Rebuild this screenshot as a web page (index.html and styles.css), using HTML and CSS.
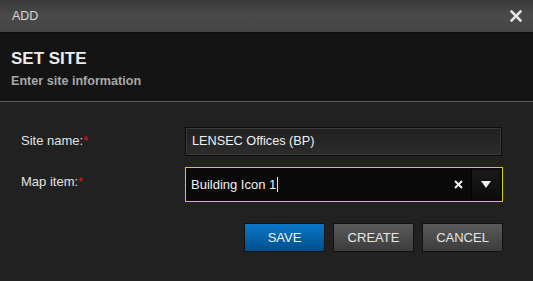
FILE: index.html
```html
<!DOCTYPE html>
<html>
<head>
<meta charset="utf-8">
<link rel="stylesheet" href="styles.css">
</head>
<body>
<div class="dialog">
  <div class="titlebar">
    <span class="title">ADD</span>
    <svg class="close" width="12" height="12" viewBox="0 0 12 12"><path d="M1.5 1.5 L10.5 10.5 M10.5 1.5 L1.5 10.5" stroke="#e6e6e6" stroke-width="2.6" stroke-linecap="square"/></svg>
  </div>
  <div class="header">
    <div class="heading">SET SITE</div>
    <div class="sub">Enter site information</div>
  </div>
  <div class="content">
    <div class="row">
      <label class="label">Site name:<span class="req">*</span></label>
      <div class="input">LENSEC Offices (BP)</div>
    </div>
    <div class="row row2">
      <label class="label">Map item:<span class="req">*</span></label>
      <div class="select">
        <div class="value">Building Icon 1<span class="caret"></span></div>
        <svg class="clear" width="9" height="9" viewBox="0 0 9 9"><path d="M1 1 L8 8 M8 1 L1 8" stroke="#f0f0f0" stroke-width="2"/></svg>
        <div class="arrow"><svg width="10" height="8" viewBox="0 0 10 8"><path d="M0 0 H10 L5 7 Z" fill="#f2f2f2"/></svg></div>
      </div>
    </div>
    <div class="buttons">
      <button class="btn primary">SAVE</button>
      <button class="btn">CREATE</button>
      <button class="btn">CANCEL</button>
    </div>
  </div>
</div>
</body>
</html>
```
FILE: styles.css
```css
html, body {
  margin: 0;
  padding: 0;
  background: #202020;
  font-family: "Liberation Sans", Arial, sans-serif;
}
.dialog {
  width: 533px;
  height: 281px;
  background: #212121;
  overflow: hidden;
}
.titlebar {
  box-sizing: border-box;
  background: linear-gradient(#3a3a3a, #4a4a4a 50%, #454545);
  border-bottom: 1px solid #0e0e0e;
  display: flex;
  align-items: center;
  justify-content: space-between;
  padding: 0 11px 0 12px;
  height: 33px;
}
.title {
  color: #d6d6d6;
  font-size: 12.5px;
}
.close { display: block; }
.header {
  background: #141414;
  height: 69px;
  box-sizing: border-box;
  border-bottom: 1px solid #5a5a5a;
  padding: 16px 0 0 11px;
}
.heading {
  color: #ececec;
  font-weight: bold;
  font-size: 17px;
  line-height: 19px;
}
.sub {
  color: #a8a8a8;
  font-weight: bold;
  font-size: 12.6px;
  line-height: 14px;
  margin-top: 6px;
}
.content {
  padding: 25px 0 0 21px;
}
.row {
  display: flex;
  align-items: center;
}
.row2 { margin-top: 11px; }
.label {
  width: 164px;
  color: #e2e2e2;
  font-size: 13px;
  align-self: flex-start;
  padding-top: 6px;
}
.row2 .label { padding-top: 7px; }
.req { color: #e01818; }
.input {
  width: 317px;
  height: 29px;
  box-sizing: border-box;
  border: 1px solid #0c0c0c;
  box-shadow: inset 0 0 0 1px #3a3a3a;
  background: linear-gradient(#202020, #2c2c2c);
  color: #f0f0f0;
  font-size: 12.7px;
  line-height: 27px;
  padding-left: 6px;
}
.select {
  width: 318px;
  height: 35px;
  box-sizing: border-box;
  border: 1px solid #d8d000;
  background: #0a0a0a;
  display: flex;
  align-items: center;
  padding: 2px;
}
.value {
  flex: 1;
  color: #f0f0f0;
  font-size: 13px;
  padding-left: 3px;
  display: flex;
  align-items: center;
}
.caret {
  display: inline-block;
  width: 1px;
  height: 15px;
  background: #e8e8e8;
  margin-left: 1px;
}
.clear { margin-right: 8px; display: block; }
.arrow {
  width: 28px;
  height: 100%;
  background: linear-gradient(#1a1a1a, #0c0c0c);
  border-left: 1px solid #000;
  display: flex;
  align-items: center;
  justify-content: center;
}
.arrow svg { display: block; }
.buttons {
  display: flex;
  gap: 8px;
  margin-top: 21px;
  padding-left: 223px;
}
.btn {
  width: 81px;
  height: 29px;
  border: 1px solid #111;
  background: linear-gradient(#5a5a5a, #3c3c3c);
  color: #e6e6e6;
  font-family: "Liberation Sans", Arial, sans-serif;
  font-size: 13px;
  padding: 0;
  margin: 0;
}
.btn.primary {
  background: linear-gradient(#0a78c8, #004e8a);
  color: #f2f2f2;
}
```
